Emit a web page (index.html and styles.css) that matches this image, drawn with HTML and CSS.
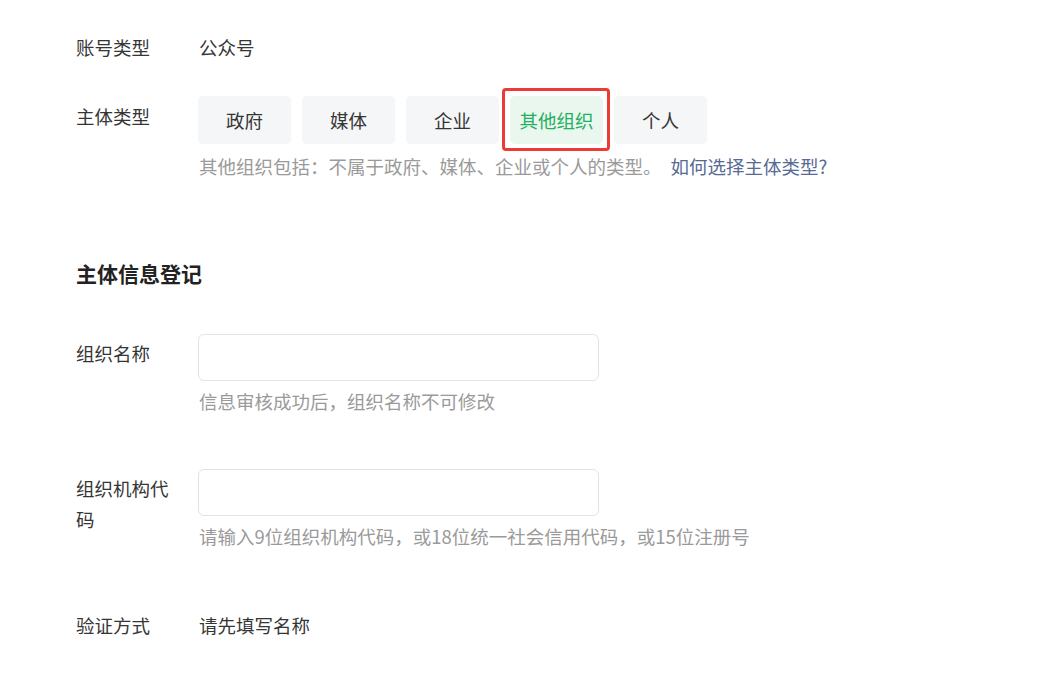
FILE: index.html
```html
<!DOCTYPE html>
<html lang="zh-CN">
<head>
<meta charset="utf-8">
<title>主体信息登记</title>
<link rel="stylesheet" href="styles.css">
</head>
<body>
<div class="page">
  <div class="row row-account">
    <div class="label">账号类型</div>
    <div class="field"><div class="value">公众号</div></div>
  </div>

  <div class="row row-type">
    <div class="label label-btn">主体类型</div>
    <div class="field">
      <div class="type-group">
        <button class="type-btn">政府</button>
        <button class="type-btn">媒体</button>
        <button class="type-btn">企业</button>
        <span class="mark"><button class="type-btn is-active">其他组织</button></span>
        <button class="type-btn">个人</button>
      </div>
      <div class="tip">其他组织包括：不属于政府、媒体、企业或个人的类型。<a class="link" href="#">如何选择主体类型?</a></div>
    </div>
  </div>

  <h2 class="section-title">主体信息登记</h2>

  <div class="row row-name">
    <div class="label label-input">组织名称</div>
    <div class="field">
      <input class="text-input" type="text">
      <div class="tip">信息审核成功后，组织名称不可修改</div>
    </div>
  </div>

  <div class="row row-code">
    <div class="label label-input">组织机构代码</div>
    <div class="field">
      <input class="text-input" type="text">
      <div class="tip">请输入9位组织机构代码，或18位统一社会信用代码，或15位注册号</div>
    </div>
  </div>

  <div class="row row-verify">
    <div class="label">验证方式</div>
    <div class="field"><div class="value">请先填写名称</div></div>
  </div>
</div>
</body>
</html>
```

FILE: styles.css
```css
html, body {
  margin: 0;
  padding: 0;
  background: #ffffff;
}

body {
  font-family: "Noto Sans CJK SC", "Noto Sans", sans-serif;
  font-size: 18.5px;
  line-height: 31px;
  color: #353535;
}

.page {
  padding: 32px 0 0 76px;
}

.row {
  display: flex;
  align-items: flex-start;
}

.label {
  flex: 0 0 100px;
  width: 100px;
  margin-right: 23px;
  color: #353535;
}

.label-btn {
  padding-top: 5px;
}

.label-input {
  padding-top: 4px;
}

.field {
  display: flex;
  flex-direction: column;
  align-items: flex-start;
}

.value {
  color: #353535;
}

.row-type {
  margin-top: 33px;
}

.type-group {
  display: flex;
  gap: 11px;
  margin-left: -1px;
}

.type-btn {
  width: 93px;
  height: 48px;
  border: 0;
  border-radius: 5px;
  background: #f5f6f7;
  font-family: inherit;
  font-size: 18.5px;
  color: #353535;
  padding: 0;
  cursor: pointer;
}

.type-btn.is-active {
  background: #eaf7ef;
  color: #22b060;
}

.mark {
  position: relative;
  display: flex;
}

.mark::after {
  content: "";
  position: absolute;
  left: -8px;
  right: -7px;
  top: -8px;
  bottom: -7px;
  border: 3px solid #ea3b34;
  border-radius: 4px;
  pointer-events: none;
}

.tip {
  margin-top: 7px;
  color: #9a9a9a;
  white-space: nowrap;
}

.link {
  margin-left: 9px;
  color: #576b95;
  text-decoration: none;
}

.section-title {
  margin: 76px 0 0;
  font-size: 21px;
  line-height: 30px;
  font-weight: 600;
  color: #222222;
}

.row-name {
  margin-top: 46px;
}

.row-code {
  margin-top: 52px;
}

.row-verify {
  margin-top: 58px;
}

.text-input {
  box-sizing: border-box;
  width: 401px;
  height: 47px;
  margin-left: -1px;
  border: 1px solid #e3e3e3;
  border-radius: 6px;
  background: #ffffff;
  outline: none;
  padding: 0 12px;
  font-family: inherit;
  font-size: 18px;
}

.row-name .tip,
.row-code .tip {
  margin-top: 5px;
}
```
